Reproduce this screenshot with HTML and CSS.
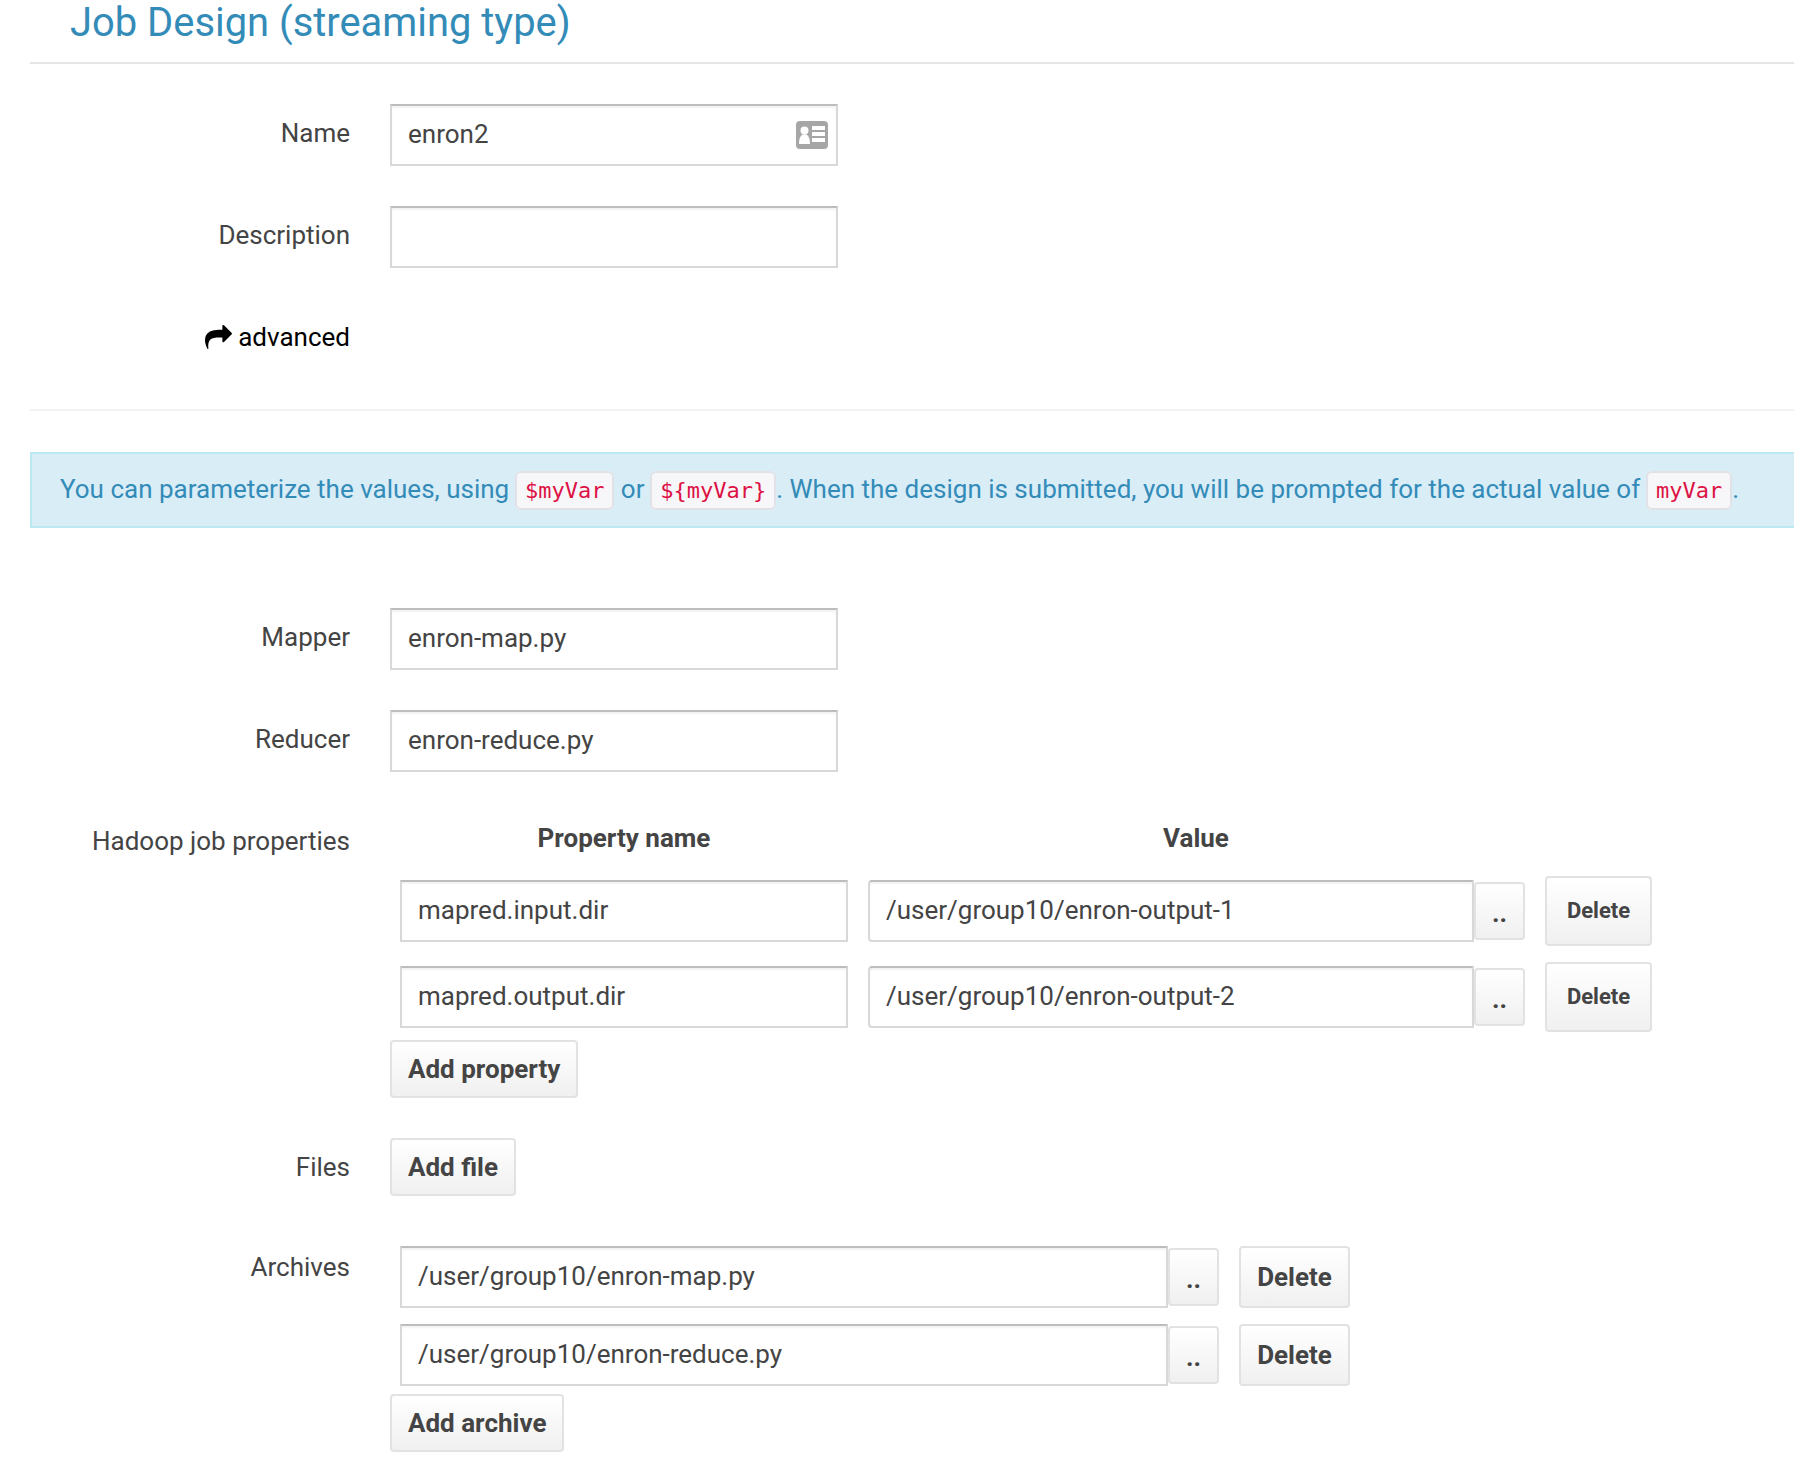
FILE: index.html
```html
<!DOCTYPE html>
<html lang="en">
<head>
    <meta charset="UTF-8">
    <title>Job Design</title>
    <link rel="stylesheet" href="styles.css">
</head>
<body>
    <main class="page">
        <h1 class="title">Job Design (streaming type)</h1>

        <section class="top-fields">
            <div class="row">
                <label class="label">Name</label>
                <div class="input-wrap">
                    <input class="field field-main" type="text" value="enron2">
                    <svg class="card-icon" viewBox="0 0 32 28">
                        <rect width="32" height="28" rx="4" fill="#a6a6a6"/>
                        <circle cx="8.500" cy="9.500" r="4" fill="#fff"/>
                        <path fill="#fff" d="M3 23c0-5 1-8 3.500-9.500h4C13 15 14 18 14 23z"/>
                        <path fill="#fff" d="M16 5h13v4H16zM16 11h13v4H16zM16 17h13v4H16z"/>
                    </svg>
                </div>
            </div>
            <div class="row">
                <label class="label">Description</label>
                <input class="field field-main" type="text">
            </div>
            <div class="row row-advanced">
                <a class="label advanced">
                    <svg class="share-icon" viewBox="0 0 1792 1792">
                        <path d="M1792 640q0 26-19 45l-512 512q-19 19-45 19t-45-19-19-45v-256h-224q-98 0-175.500 6t-154 21.500-133 42.500-105.500 69.500-80 101-48.500 138.500-17.500 181q0 55 5 123 0 6 2.500 23.500t2.500 26.500q0 15-8.500 25t-23.500 10q-16 0-28-17-7-9-13-22t-13.500-30-10.500-24q-127-285-127-451 0-199 53-333 162-403 875-403h224v-256q0-26 19-45t45-19 45 19l512 512q19 19 19 45z"/>
                    </svg>
                    advanced
                </a>
            </div>
        </section>

        <div class="alert">You can parameterize the values, using <code>$myVar</code> or <code>${myVar}</code>. When the design is submitted, you will be prompted for the actual value of <code>myVar</code>.</div>

        <section class="bottom-fields">
            <div class="row">
                <label class="label">Mapper</label>
                <input class="field field-main" type="text" value="enron-map.py">
            </div>
            <div class="row">
                <label class="label">Reducer</label>
                <input class="field field-main" type="text" value="enron-reduce.py">
            </div>

            <div class="row row-group">
                <label class="label">Hadoop job properties</label>
                <div class="group">
                    <div class="prop-head">
                        <span class="head-name">Property name</span>
                        <span class="head-value">Value</span>
                    </div>
                    <div class="prop-row">
                        <input class="field field-main" type="text" value="mapred.input.dir">
                        <input class="field field-value" type="text" value="/user/group10/enron-output-1">
                        <button class="btn btn-dots">..</button>
                        <button class="btn btn-delete-big">Delete</button>
                    </div>
                    <div class="prop-row">
                        <input class="field field-main" type="text" value="mapred.output.dir">
                        <input class="field field-value" type="text" value="/user/group10/enron-output-2">
                        <button class="btn btn-dots">..</button>
                        <button class="btn btn-delete-big">Delete</button>
                    </div>
                    <button class="btn btn-add">Add property</button>
                </div>
            </div>

            <div class="row row-files">
                <label class="label">Files</label>
                <button class="btn btn-add">Add file</button>
            </div>

            <div class="row row-archives">
                <label class="label label-archives">Archives</label>
                <div class="group">
                    <div class="archive-row">
                        <input class="field field-archive" type="text" value="/user/group10/enron-map.py">
                        <button class="btn btn-dots">..</button>
                        <button class="btn btn-delete">Delete</button>
                    </div>
                    <div class="archive-row">
                        <input class="field field-archive" type="text" value="/user/group10/enron-reduce.py">
                        <button class="btn btn-dots">..</button>
                        <button class="btn btn-delete">Delete</button>
                    </div>
                    <button class="btn btn-add">Add archive</button>
                </div>
            </div>
        </section>
    </main>
</body>
</html>
```

FILE: styles.css
```css
html, body {
    margin: 0;
    padding: 0;
    background-color: #fff;
    overflow: hidden;
}
body {
    font-family: Roboto, "Liberation Sans", sans-serif;
    font-size: 26px;
    color: #444;
    height: 1472px;
}
.page {
    margin-left: 30px;
}
.title {
    margin: 0;
    height: 62px;
    padding-left: 40px;
    font-size: 39.900px;
    font-weight: 400;
    line-height: 46px;
    color: #338bb8;
    border-bottom: 2px solid #e5e5e5;
}
.top-fields {
    padding-top: 40px;
    height: 305px;
    border-bottom: 2px solid #f2f2f2;
}
.row {
    display: flex;
    align-items: flex-start;
    margin-bottom: 40px;
}
.label {
    width: 320px;
    margin-right: 40px;
    text-align: right;
    line-height: 58px;
    flex: none;
}
.field {
    box-sizing: border-box;
    height: 62px;
    padding: 0 16px 2px;
    font-family: inherit;
    font-size: 26px;
    color: #444;
    background-color: #fff;
    border: 2px solid #d8d8d8;
    border-top-color: #bdbdbd;
    box-shadow: inset 0 2px 2px rgba(0, 0, 0, 0.05);
    outline: none;
    flex: none;
}
.field-main {
    width: 448px;
}
.field-value {
    width: 606px;
    margin-left: 20px;
    border-radius: 4px 0 0 4px;
}
.field-archive {
    width: 768px;
}
.input-wrap {
    position: relative;
    display: flex;
}
.card-icon {
    position: absolute;
    right: 10px;
    top: 17px;
    width: 32px;
    height: 28px;
}
.row-advanced {
    margin-bottom: 0;
}
.advanced {
    color: #000;
    display: flex;
    justify-content: flex-end;
    align-items: center;
    gap: 6px;
}
.share-icon {
    width: 27px;
    height: 27px;
}
.alert {
    box-sizing: border-box;
    height: 76px;
    margin-top: 41px;
    padding-left: 28px;
    line-height: 70px;
    white-space: nowrap;
    color: #338bb8;
    background-color: #d9edf7;
    border: 2px solid #bce8f1;
    border-right: none;
}
code {
    font-family: "DejaVu Sans Mono", monospace;
    font-size: 22px;
    color: #dd1144;
    background-color: #f7f7f9;
    border: 2px solid #e1e1e8;
    border-radius: 6px;
    padding: 5px 8px;
    margin-left: -0.700px;
}
.bottom-fields {
    padding-top: 80px;
}
.row-group {
    margin-bottom: 40px;
}
.group {
    display: flex;
    flex-direction: column;
    align-items: flex-start;
}
.prop-head {
    display: flex;
    height: 64px;
    margin-left: 10px;
    font-weight: 700;
    line-height: 53px;
}
.head-name {
    width: 448px;
    text-align: center;
}
.head-value {
    width: 656px;
    margin-left: 20px;
    text-align: center;
}
.prop-row, .archive-row {
    display: flex;
    align-items: center;
    margin-left: 10px;
}
.prop-row {
    height: 70px;
    margin-bottom: 16px;
}
.prop-row:last-of-type {
    margin-bottom: 8px;
}
.archive-row {
    height: 62px;
    margin-bottom: 16px;
}
.btn {
    box-sizing: border-box;
    font-family: inherit;
    font-size: 26px;
    font-weight: 700;
    color: #444;
    background: linear-gradient(to bottom, #fff, #f0f0f0);
    border: 2px solid #e2e2e2;
    border-radius: 4px;
    padding: 0;
    flex: none;
}
.btn-add {
    height: 58px;
    padding: 0 16px;
}
.btn-dots {
    width: 51px;
    height: 58px;
    line-height: 58px;
    padding-bottom: 2px;
}
.btn-delete-big {
    width: 107px;
    height: 70px;
    margin-left: 20px;
    padding-bottom: 2px;
    font-size: 22px;
}
.btn-delete {
    width: 111px;
    height: 62px;
    margin-left: 20px;
}
.row-files {
    margin-bottom: 50px;
}
.label-archives {
    line-height: 42px;
}
.row-archives .archive-row:nth-child(2) {
    margin-bottom: 8px;
}
```
